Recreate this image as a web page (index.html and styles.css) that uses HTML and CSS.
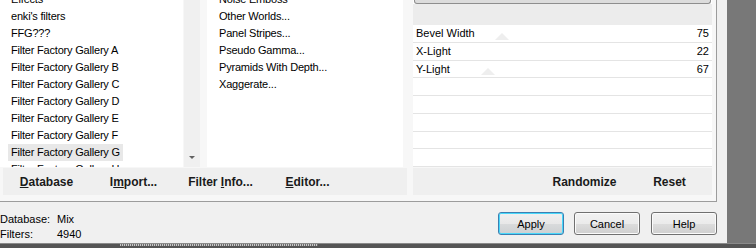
FILE: index.html
```html
<!DOCTYPE html>
<html>
<head>
<meta charset="utf-8">
<link rel="stylesheet" href="styles.css">
</head>
<body>
<div class="screen">
  <div class="dialog">
    <div class="frame">
      <div class="leftcol">
        <div class="lists">
          <div class="catbox">
            <div class="listview">
              <ul class="items">
                <li>Effects</li>
                <li>enki's filters</li>
                <li>FFG???</li>
                <li>Filter Factory Gallery A</li>
                <li>Filter Factory Gallery B</li>
                <li>Filter Factory Gallery C</li>
                <li>Filter Factory Gallery D</li>
                <li>Filter Factory Gallery E</li>
                <li>Filter Factory Gallery F</li>
                <li class="sel"><span>Filter Factory Gallery G</span></li>
                <li>Filter Factory Gallery H</li>
              </ul>
            </div>
            <div class="scrollbar"><span class="arrow-down"></span></div>
          </div>
          <div class="filtbox">
            <ul class="items">
              <li>Noise Emboss</li>
              <li>Other Worlds...</li>
              <li>Panel Stripes...</li>
              <li>Pseudo Gamma...</li>
              <li>Pyramids With Depth...</li>
              <li>Xaggerate...</li>
            </ul>
          </div>
        </div>
        <div class="bar">
          <span class="flat"><u>D</u>atabase</span>
          <span class="flat">I<u>m</u>port...</span>
          <span class="flat">Filter <u>I</u>nfo...</span>
          <span class="flat"><u>E</u>ditor...</span>
        </div>
      </div>
      <div class="rightcol">
        <div class="params">
          <div class="preview-edge"></div>
          <div class="band"></div>
          <div class="row"><span>Bevel Width</span><span>75</span><i class="thumb t1"></i></div>
          <div class="row"><span>X-Light</span><span>22</span></div>
          <div class="row"><span>Y-Light</span><span>67</span><i class="thumb t2"></i></div>
          <div class="row"></div>
          <div class="row"></div>
          <div class="row"></div>
          <div class="row"></div>
          <div class="row"></div>
        </div>
        <div class="bar right">
          <span class="flat r">Randomize</span>
          <span class="flat r">Reset</span>
        </div>
      </div>
    </div>
    <div class="footer">
      <div class="status">
        <span>Database:</span><span>Mix</span>
        <span>Filters:</span><span>4940</span>
      </div>
      <div class="buttons">
        <button class="btn default">Apply</button>
        <button class="btn">Cancel</button>
        <button class="btn help">Help</button>
      </div>
    </div>
  </div>
  <div class="backdrop"></div>
</div>
<div class="taskstrip"><div class="dots"></div></div>
</body>
</html>
```

FILE: styles.css
```css
* { box-sizing: border-box; margin: 0; padding: 0; }

html, body {
  width: 756px;
  height: 248px;
  overflow: hidden;
}

body {
  font-family: "Liberation Sans", Arial, sans-serif;
  font-size: 11px;
  color: #000;
  background: #787878;
}

.screen {
  display: flex;
  height: 243px;
}

.dialog {
  width: 727px;
  background: #f0f0f0;
  display: flex;
  flex-direction: column;
}

.backdrop {
  flex: 1;
  background: #787878;
}

.frame {
  width: 717px;
  height: 202px;
  background: #f7f7f7;
  border-right: 1px solid #9c9c9c;
  border-bottom: 1px solid #9c9c9c;
  display: flex;
  gap: 5px;
}

.leftcol {
  width: 408px;
  display: flex;
  flex-direction: column;
}

.lists {
  height: 167px;
  display: flex;
}

.catbox {
  width: 200px;
  display: flex;
  background: #fff;
}

.listview {
  flex: 1;
  overflow: hidden;
}

.scrollbar {
  width: 17px;
  background: #f0f0f0;
  border-left: 1px solid #f7f7f7;
  display: flex;
  align-items: flex-end;
  justify-content: center;
  padding-bottom: 8px;
}

.arrow-down {
  width: 0;
  height: 0;
  border-left: 3px solid transparent;
  border-right: 3px solid transparent;
  border-top: 3px solid #606060;
}

.filtbox {
  margin-left: 7px;
  width: 196px;
  background: #fff;
  overflow: hidden;
}

.items {
  list-style: none;
  margin-top: -9px;
}

.items li {
  height: 17px;
  line-height: 17px;
  padding-left: 11px;
  white-space: nowrap;
  letter-spacing: -0.2px;
}

.filtbox .items li {
  padding-left: 12px;
}

.items li.sel span {
  display: inline-block;
  background: #e8e8e8;
  margin-left: -3px;
  padding: 0 3px;
}

.bar {
  height: 27px;
  margin-top: 1px;
  background: #efefef;
  display: flex;
  align-items: center;
  font-weight: bold;
  font-size: 12px;
  color: #1a1a1a;
}

.leftcol .bar {
  margin-left: 3px;
  width: 404px;
}

.flat {
  width: 87px;
  text-align: center;
  white-space: nowrap;
}

.bar.right {
  justify-content: flex-end;
}

.flat.r {
  width: 85px;
}

.rightcol {
  width: 299px;
  display: flex;
  flex-direction: column;
}

.params {
  height: 167px;
  background: #fff;
  overflow: hidden;
}

.preview-edge {
  height: 4px;
  margin: 0 1px;
  background: #dcdcdc;
  border: 1px solid #8e8e8e;
  border-top: none;
  border-radius: 0 0 3px 3px;
}

.band {
  height: 21px;
  background: #ececec;
}

.row {
  position: relative;
  height: 17.75px;
  display: flex;
  justify-content: space-between;
  align-items: center;
  padding: 0 3px;
  border-bottom: 1px solid #e4e4e4;
  white-space: nowrap;
}

.row span {
  position: relative;
  z-index: 1;
}

.thumb {
  position: absolute;
  width: 0;
  height: 0;
  border-left: 7px solid transparent;
  border-right: 7px solid transparent;
  border-bottom: 7px solid #eeeeee;
}

.thumb.t1 { left: 82px; top: 8px; }
.thumb.t2 { left: 68px; top: 7px; }

.footer {
  height: 41px;
  display: flex;
  justify-content: space-between;
  padding-right: 10px;
}

.status {
  display: grid;
  grid-template-columns: 57px auto;
  line-height: 13px;
  padding-top: 11px;
  color: #000;
}

.buttons {
  display: flex;
  gap: 10px;
  padding-top: 10px;
}

.btn {
  width: 66px;
  height: 23px;
  font-family: "Liberation Sans", Arial, sans-serif;
  font-size: 11px;
  color: #000;
  border: 1px solid #707070;
  border-radius: 3px;
  background: linear-gradient(#f2f2f2 0%, #ebebeb 50%, #dddddd 51%, #cfcfcf 100%);
  box-shadow: inset 0 0 0 1px #fbfbfb;
}

.btn.help {
  margin-left: 1px;
}

.btn.default {
  border-color: #3c7fb1;
  box-shadow: inset 0 0 0 1px #48d8fb;
  background: linear-gradient(#f0f0f0 0%, #e8e8e8 50%, #d9dbdc 51%, #cdd0d2 100%);
}

.taskstrip {
  height: 5px;
  background: #555;
  border-top: 1px solid #8a8a8a;
}

.dots {
  margin-left: 120px;
  width: 198px;
  height: 2px;
  background: repeating-linear-gradient(90deg, #c8c8c8 0 1px, #6a6a6a 1px 2px);
}
```
